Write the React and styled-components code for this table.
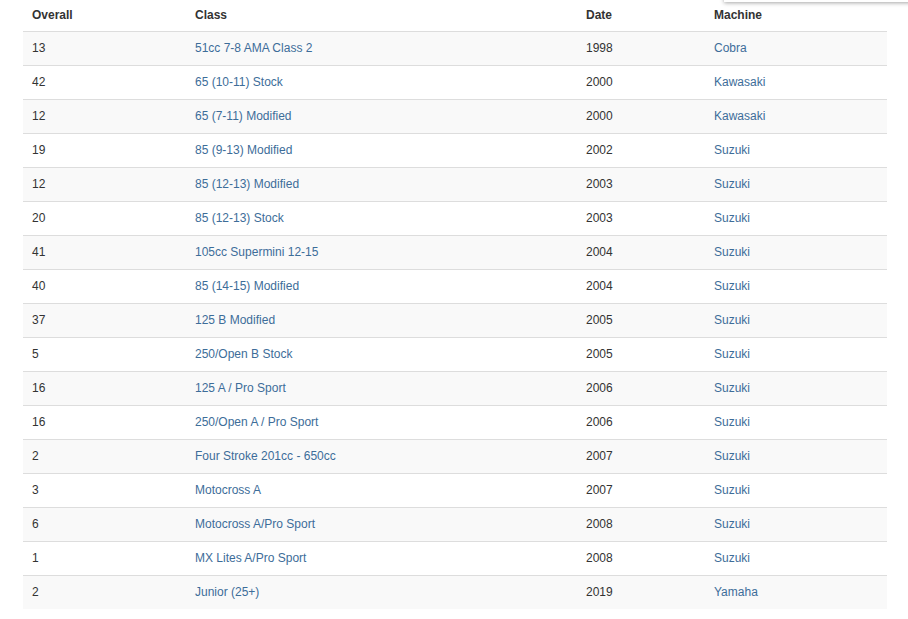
import React from "react";
import styled, { createGlobalStyle } from "styled-components";

const GlobalStyle = createGlobalStyle`
  body {
    margin: 0;
    background: #fff;
    font-family: "Helvetica Neue", "Liberation Sans", Arial, sans-serif;
    font-size: 12px;
    color: #333;
  }
`;

const Page = styled.div`
  padding: 0 21px 0 23px;
  margin-top: -1px;
`;

const Popover = styled.div`
  position: fixed;
  top: -40px;
  left: 724px;
  right: -10px;
  height: 42px;
  background: #fff;
  box-shadow: 0 1px 4px rgba(0, 0, 0, 0.35);
  z-index: 5;
`;

const Table = styled.table`
  width: 864px;
  border-collapse: collapse;
  border-spacing: 0;
  table-layout: fixed;
`;

const Th = styled.th`
  box-sizing: border-box;
  text-align: left;
  font-weight: bold;
  padding: 8px 8px 7px 9px;
  line-height: 17px;
  border-bottom: 1px solid #ddd;
  color: #333;
  width: ${({ w }) => w}px;
`;

const Row = styled.tr`
  background: ${({ striped }) => (striped ? "#f9f9f9" : "#fff")};
`;

const Td = styled.td`
  padding: 8px 8px 8px 9px;
  line-height: 17px;
  border-bottom: 1px solid #ddd;
  color: ${({ link }) => (link ? "#3d6d99" : "#333")};
  white-space: nowrap;

  tr:last-child & {
    border-bottom: none;
  }
`;

const rows = [
  ["13", "51cc 7-8 AMA Class 2", "1998", "Cobra"],
  ["42", "65 (10-11) Stock", "2000", "Kawasaki"],
  ["12", "65 (7-11) Modified", "2000", "Kawasaki"],
  ["19", "85 (9-13) Modified", "2002", "Suzuki"],
  ["12", "85 (12-13) Modified", "2003", "Suzuki"],
  ["20", "85 (12-13) Stock", "2003", "Suzuki"],
  ["41", "105cc Supermini 12-15", "2004", "Suzuki"],
  ["40", "85 (14-15) Modified", "2004", "Suzuki"],
  ["37", "125 B Modified", "2005", "Suzuki"],
  ["5", "250/Open B Stock", "2005", "Suzuki"],
  ["16", "125 A / Pro Sport", "2006", "Suzuki"],
  ["16", "250/Open A / Pro Sport", "2006", "Suzuki"],
  ["2", "Four Stroke 201cc - 650cc", "2007", "Suzuki"],
  ["3", "Motocross A", "2007", "Suzuki"],
  ["6", "Motocross A/Pro Sport", "2008", "Suzuki"],
  ["1", "MX Lites A/Pro Sport", "2008", "Suzuki"],
  ["2", "Junior (25+)", "2019", "Yamaha"],
];

export default function App() {
  return (
    <>
      <GlobalStyle />
      <Popover />
      <Page>
        <Table>
          <colgroup>
            <col style={{ width: 163 }} />
            <col style={{ width: 391 }} />
            <col style={{ width: 128 }} />
            <col style={{ width: 182 }} />
          </colgroup>
          <thead>
            <tr>
              <Th>Overall</Th>
              <Th>Class</Th>
              <Th>Date</Th>
              <Th>Machine</Th>
            </tr>
          </thead>
          <tbody>
            {rows.map((r, i) => (
              <Row key={i} striped={i % 2 === 0}>
                <Td>{r[0]}</Td>
                <Td link>{r[1]}</Td>
                <Td>{r[2]}</Td>
                <Td link>{r[3]}</Td>
              </Row>
            ))}
          </tbody>
        </Table>
      </Page>
    </>
  );
}
